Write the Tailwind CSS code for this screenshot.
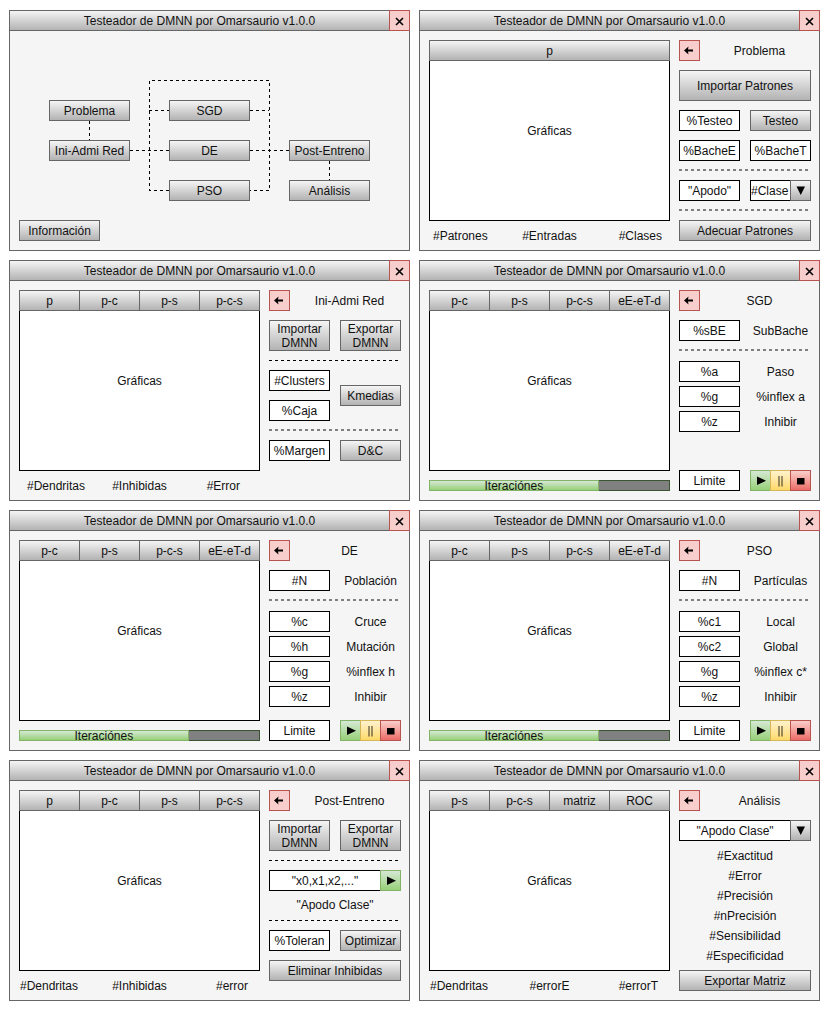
<!DOCTYPE html>
<html lang="es">
<head>
<meta charset="utf-8">
<meta name="viewport" content="width=device-width, initial-scale=1">
<title>Testeador de DMNN por Omarsaurio v1.0.0</title>
<script src="https://cdn.jsdelivr.net/npm/@tailwindcss/browser@4"></script>
</head>
<body class="bg-white font-['Liberation_Sans',Arial,sans-serif] text-[12px] leading-[14px] text-[#111]">

<svg class="hidden" aria-hidden="true">
  <symbol id="close" viewBox="0 0 19 19"><path d="M6 7l7 7M13 7l-7 7" fill="none" stroke="#000" stroke-width="1.6"/></symbol>
  <symbol id="back" viewBox="0 0 19 19"><path d="M4 9.500L8.500 5.500L8 8.600H13V10.400H8L8.500 13.500z" fill="#000"/></symbol>
  <symbol id="play" viewBox="0 0 19 19"><path d="M6 5.500L15 9.750L6 14z" fill="#000"/></symbol>
  <symbol id="pause" viewBox="0 0 19 19"><path d="M8 5v10.500M11 5v10.500" fill="none" stroke="#000" stroke-opacity=".4" stroke-width="2"/></symbol>
  <symbol id="stop" viewBox="0 0 19 19"><path d="M6 7h7.500v6.500H6z" fill="#000"/></symbol>
  <symbol id="down" viewBox="0 0 19 19"><path d="M5.500 5.500h8.500L9.750 14z" fill="#000"/></symbol>
</svg>

<main class="grid grid-cols-2 gap-[9px] pt-[10px] pr-[10px] pb-3 pl-[9px]">

  <!-- Menú -->
  <section class="flex min-h-[241px] flex-col">
    <header class="flex h-[21px]">
      <h2 class="flex flex-1 items-center justify-center border border-[#666] bg-linear-to-b from-[#f5f5f5] to-[#b3b3b3]">Testeador de DMNN por Omarsaurio v1.0.0</h2>
      <button aria-label="Cerrar" class="-ml-px w-[21px] border border-[#b85450] bg-[#f8cecc]"><svg class="size-[19px]"><use href="#close"/></svg></button>
    </header>
    <div class="relative flex-1 border-x border-b border-[#666] bg-[#f5f5f5]">
      <svg class="absolute top-0 left-0 h-[219px] w-[399px]" fill="none" stroke="#000" stroke-dasharray="3 3" shape-rendering="crispEdges" aria-hidden="true">
        <path d="M79.500 90V109M319.500 130V149M120 119.500H159M240 119.500H279M159 159.500H139.500V49.500H259.500V159.500H240M139 79.500H159M240 79.500H259"/>
      </svg>
      <button class="absolute top-[69px] left-[39px] h-[21px] w-[81px] border border-[#666] bg-linear-to-b from-[#f5f5f5] to-[#b3b3b3]">Problema</button>
      <button class="absolute top-[109px] left-[39px] h-[21px] w-[81px] border border-[#666] bg-linear-to-b from-[#f5f5f5] to-[#b3b3b3]">Ini-Admi Red</button>
      <button class="absolute top-[69px] left-[159px] h-[21px] w-[81px] border border-[#666] bg-linear-to-b from-[#f5f5f5] to-[#b3b3b3]">SGD</button>
      <button class="absolute top-[109px] left-[159px] h-[21px] w-[81px] border border-[#666] bg-linear-to-b from-[#f5f5f5] to-[#b3b3b3]">DE</button>
      <button class="absolute top-[149px] left-[159px] h-[21px] w-[81px] border border-[#666] bg-linear-to-b from-[#f5f5f5] to-[#b3b3b3]">PSO</button>
      <button class="absolute top-[109px] left-[279px] h-[21px] w-[81px] border border-[#666] bg-linear-to-b from-[#f5f5f5] to-[#b3b3b3]">Post-Entreno</button>
      <button class="absolute top-[149px] left-[279px] h-[21px] w-[81px] border border-[#666] bg-linear-to-b from-[#f5f5f5] to-[#b3b3b3]">Análisis</button>
      <button class="absolute top-[189px] left-[9px] h-[21px] w-[81px] border border-[#666] bg-linear-to-b from-[#f5f5f5] to-[#b3b3b3]">Información</button>
    </div>
  </section>

  <!-- Problema -->
  <section class="flex min-h-[241px] flex-col">
    <header class="flex h-[21px]">
      <h2 class="flex flex-1 items-center justify-center border border-[#666] bg-linear-to-b from-[#f5f5f5] to-[#b3b3b3]">Testeador de DMNN por Omarsaurio v1.0.0</h2>
      <button aria-label="Cerrar" class="-ml-px w-[21px] border border-[#b85450] bg-[#f8cecc]"><svg class="size-[19px]"><use href="#close"/></svg></button>
    </header>
    <div class="flex flex-1 gap-[9px] border-x border-b border-[#666] bg-[#f5f5f5] pt-[9px] pr-2 pb-2 pl-[9px]">
      <div class="flex flex-1 flex-col">
        <div class="flex h-[21px]">
          <button class="flex-1 border border-[#666] bg-linear-to-b from-[#f5f5f5] to-[#b3b3b3]">p</button>
        </div>
        <div class="flex min-h-[160px] flex-1 items-center justify-center border-x border-b border-black bg-white pb-5">Gráficas</div>
        <div class="grid grid-cols-[1fr_auto_1fr] pt-[9px] leading-3"><span class="pl-1">#Patrones</span><span>#Entradas</span><span class="pr-2 text-right">#Clases</span></div>
      </div>
      <div class="flex w-[132px] flex-col gap-[9px] pb-px">
        <div class="flex h-[21px] items-center gap-2">
          <button aria-label="Volver" class="size-[21px] border border-[#b85450] bg-[#f8cecc]"><svg class="size-[19px]"><use href="#back"/></svg></button>
          <h3 class="flex-1 text-center">Problema</h3>
        </div>
        <button class="h-[31px] border border-[#666] bg-linear-to-b from-[#f5f5f5] to-[#b3b3b3]">Importar Patrones</button>
        <div class="grid grid-cols-2 gap-x-[10px] gap-y-[9px]">
          <input aria-label="Porcentaje de testeo" value="%Testeo" class="h-[21px] w-full border border-black bg-white text-center">
          <button class="h-[21px] border border-[#666] bg-linear-to-b from-[#f5f5f5] to-[#b3b3b3]">Testeo</button>
          <input aria-label="Bache de entrenamiento" value="%BacheE" class="h-[21px] w-full border border-black bg-white text-center">
          <input aria-label="Bache de testeo" value="%BacheT" class="h-[21px] w-full border border-black bg-white text-center">
        </div>
        <div class="-mt-px h-[2px] bg-[repeating-linear-gradient(90deg,#7f7f7f_0_3px,transparent_3px_6px)]"></div>
        <div class="grid grid-cols-2 gap-[10px]">
          <input aria-label="Apodo" value="&quot;Apodo&quot;" class="h-[21px] w-full border border-black bg-white text-center">
          <div class="relative">
            <select aria-label="Clase" class="block h-[21px] w-full appearance-none border border-black bg-white pr-[19px]"><option>#Clase</option></select>
            <span class="pointer-events-none absolute top-0 right-0 size-[21px] border border-[#666] bg-linear-to-b from-[#f5f5f5] to-[#b3b3b3]"><svg class="size-[19px]"><use href="#down"/></svg></span>
          </div>
        </div>
        <div class="-mt-px h-[2px] bg-[repeating-linear-gradient(90deg,#7f7f7f_0_3px,transparent_3px_6px)]"></div>
        <button class="h-[21px] border border-[#666] bg-linear-to-b from-[#f5f5f5] to-[#b3b3b3]">Adecuar Patrones</button>
      </div>
    </div>
  </section>

  <!-- Ini-Admi Red -->
  <section class="flex min-h-[241px] flex-col">
    <header class="flex h-[21px]">
      <h2 class="flex flex-1 items-center justify-center border border-[#666] bg-linear-to-b from-[#f5f5f5] to-[#b3b3b3]">Testeador de DMNN por Omarsaurio v1.0.0</h2>
      <button aria-label="Cerrar" class="-ml-px w-[21px] border border-[#b85450] bg-[#f8cecc]"><svg class="size-[19px]"><use href="#close"/></svg></button>
    </header>
    <div class="flex flex-1 gap-[9px] border-x border-b border-[#666] bg-[#f5f5f5] pt-[9px] pr-2 pb-2 pl-[9px]">
      <div class="flex flex-1 flex-col">
        <div class="flex h-[21px]">
          <button class="flex-1 border border-[#666] bg-linear-to-b from-[#f5f5f5] to-[#b3b3b3]">p</button>
          <button class="-ml-px flex-1 border border-[#666] bg-linear-to-b from-[#f5f5f5] to-[#b3b3b3]">p-c</button>
          <button class="-ml-px flex-1 border border-[#666] bg-linear-to-b from-[#f5f5f5] to-[#b3b3b3]">p-s</button>
          <button class="-ml-px flex-1 border border-[#666] bg-linear-to-b from-[#f5f5f5] to-[#b3b3b3]">p-c-s</button>
        </div>
        <div class="flex min-h-[160px] flex-1 items-center justify-center border-x border-b border-black bg-white pb-5">Gráficas</div>
        <div class="grid grid-cols-[1fr_auto_1fr] pt-[9px] leading-3"><span class="pl-2">#Dendritas</span><span>#Inhibidas</span><span class="pr-5 text-right">#Error</span></div>
      </div>
      <div class="flex w-[132px] flex-col gap-[9px] pb-px">
        <div class="flex h-[21px] items-center gap-2">
          <button aria-label="Volver" class="size-[21px] border border-[#b85450] bg-[#f8cecc]"><svg class="size-[19px]"><use href="#back"/></svg></button>
          <h3 class="flex-1 text-center">Ini-Admi Red</h3>
        </div>
        <div class="grid grid-cols-2 gap-[10px]">
          <button class="h-[31px] border border-[#666] bg-linear-to-b from-[#f5f5f5] to-[#b3b3b3]">Importar<br>DMNN</button>
          <button class="h-[31px] border border-[#666] bg-linear-to-b from-[#f5f5f5] to-[#b3b3b3]">Exportar<br>DMNN</button>
        </div>
        <div class="h-px bg-[repeating-linear-gradient(90deg,#000_0_3px,transparent_3px_6px)]"></div>
        <div class="grid grid-cols-2 items-center gap-[10px]">
          <div class="flex flex-col gap-[9px]">
            <input aria-label="Clusters" value="#Clusters" class="h-[21px] w-full border border-black bg-white text-center">
            <input aria-label="Caja" value="%Caja" class="h-[21px] w-full border border-black bg-white text-center">
          </div>
          <button class="h-[21px] border border-[#666] bg-linear-to-b from-[#f5f5f5] to-[#b3b3b3]">Kmedias</button>
        </div>
        <div class="-mt-px h-[2px] bg-[repeating-linear-gradient(90deg,#7f7f7f_0_3px,transparent_3px_6px)]"></div>
        <div class="grid grid-cols-2 gap-[10px]">
          <input aria-label="Margen" value="%Margen" class="h-[21px] w-full border border-black bg-white text-center">
          <button class="h-[21px] border border-[#666] bg-linear-to-b from-[#f5f5f5] to-[#b3b3b3]">D&amp;C</button>
        </div>
      </div>
    </div>
  </section>

  <!-- SGD -->
  <section class="flex min-h-[241px] flex-col">
    <header class="flex h-[21px]">
      <h2 class="flex flex-1 items-center justify-center border border-[#666] bg-linear-to-b from-[#f5f5f5] to-[#b3b3b3]">Testeador de DMNN por Omarsaurio v1.0.0</h2>
      <button aria-label="Cerrar" class="-ml-px w-[21px] border border-[#b85450] bg-[#f8cecc]"><svg class="size-[19px]"><use href="#close"/></svg></button>
    </header>
    <div class="flex flex-1 gap-[9px] border-x border-b border-[#666] bg-[#f5f5f5] pt-[9px] pr-2 pb-2 pl-[9px]">
      <div class="flex flex-1 flex-col pb-px">
        <div class="flex h-[21px]">
          <button class="flex-1 border border-[#666] bg-linear-to-b from-[#f5f5f5] to-[#b3b3b3]">p-c</button>
          <button class="-ml-px flex-1 border border-[#666] bg-linear-to-b from-[#f5f5f5] to-[#b3b3b3]">p-s</button>
          <button class="-ml-px flex-1 border border-[#666] bg-linear-to-b from-[#f5f5f5] to-[#b3b3b3]">p-c-s</button>
          <button class="-ml-px flex-1 border border-[#666] bg-linear-to-b from-[#f5f5f5] to-[#b3b3b3]">eE-eT-d</button>
        </div>
        <div class="flex min-h-[160px] flex-1 items-center justify-center border-x border-b border-black bg-white pb-5">Gráficas</div>
        <div role="progressbar" aria-label="Iteraciónes" aria-valuenow="71" class="mt-[9px] flex h-[11px] border border-[#3a5431] bg-[#808080]">
          <div class="-m-px flex items-center justify-center border border-[#82b366] bg-linear-to-b from-[#d5e8d4] to-[#97d077]" style="width:71%">Iteraciónes</div>
        </div>
      </div>
      <div class="flex w-[132px] flex-col gap-[9px] pb-px">
        <div class="flex h-[21px] items-center gap-2">
          <button aria-label="Volver" class="size-[21px] border border-[#b85450] bg-[#f8cecc]"><svg class="size-[19px]"><use href="#back"/></svg></button>
          <h3 class="flex-1 text-center">SGD</h3>
        </div>
        <div class="grid grid-cols-2 items-center gap-[10px]">
          <input id="sgd-sb" value="%sBE" class="h-[21px] w-full border border-black bg-white text-center"><label for="sgd-sb" class="text-center">SubBache</label>
        </div>
        <div class="-mt-px h-[2px] bg-[repeating-linear-gradient(90deg,#7f7f7f_0_3px,transparent_3px_6px)]"></div>
        <div class="grid grid-cols-2 items-center gap-x-[10px] gap-y-1 pt-px">
          <input id="sgd-a" value="%a" class="h-[21px] w-full border border-black bg-white text-center"><label for="sgd-a" class="text-center">Paso</label>
          <input id="sgd-g" value="%g" class="h-[21px] w-full border border-black bg-white text-center"><label for="sgd-g" class="text-center">%inflex a</label>
          <input id="sgd-z" value="%z" class="h-[21px] w-full border border-black bg-white text-center"><label for="sgd-z" class="text-center">Inhibir</label>
        </div>
        <div class="mt-auto grid grid-cols-2 gap-[10px]">
          <input aria-label="Limite" value="Limite" class="h-[21px] w-full border border-black bg-white text-center">
          <div class="flex">
            <button aria-label="Iniciar" class="size-[21px] border border-[#82b366] bg-linear-to-b from-[#d5e8d4] to-[#97d077]"><svg class="size-[19px]"><use href="#play"/></svg></button>
            <button aria-label="Pausar" class="-ml-px size-[21px] border border-[#d6b656] bg-linear-to-b from-[#fff2cc] to-[#ffd966]"><svg class="size-[19px]"><use href="#pause"/></svg></button>
            <button aria-label="Detener" class="-ml-px size-[21px] border border-[#b85450] bg-linear-to-b from-[#f8cecc] to-[#ea6b66]"><svg class="size-[19px]"><use href="#stop"/></svg></button>
          </div>
        </div>
      </div>
    </div>
  </section>

  <!-- DE -->
  <section class="flex min-h-[241px] flex-col">
    <header class="flex h-[21px]">
      <h2 class="flex flex-1 items-center justify-center border border-[#666] bg-linear-to-b from-[#f5f5f5] to-[#b3b3b3]">Testeador de DMNN por Omarsaurio v1.0.0</h2>
      <button aria-label="Cerrar" class="-ml-px w-[21px] border border-[#b85450] bg-[#f8cecc]"><svg class="size-[19px]"><use href="#close"/></svg></button>
    </header>
    <div class="flex flex-1 gap-[9px] border-x border-b border-[#666] bg-[#f5f5f5] pt-[9px] pr-2 pb-2 pl-[9px]">
      <div class="flex flex-1 flex-col pb-px">
        <div class="flex h-[21px]">
          <button class="flex-1 border border-[#666] bg-linear-to-b from-[#f5f5f5] to-[#b3b3b3]">p-c</button>
          <button class="-ml-px flex-1 border border-[#666] bg-linear-to-b from-[#f5f5f5] to-[#b3b3b3]">p-s</button>
          <button class="-ml-px flex-1 border border-[#666] bg-linear-to-b from-[#f5f5f5] to-[#b3b3b3]">p-c-s</button>
          <button class="-ml-px flex-1 border border-[#666] bg-linear-to-b from-[#f5f5f5] to-[#b3b3b3]">eE-eT-d</button>
        </div>
        <div class="flex min-h-[160px] flex-1 items-center justify-center border-x border-b border-black bg-white pb-5">Gráficas</div>
        <div role="progressbar" aria-label="Iteraciónes" aria-valuenow="71" class="mt-[9px] flex h-[11px] border border-[#3a5431] bg-[#808080]">
          <div class="-m-px flex items-center justify-center border border-[#82b366] bg-linear-to-b from-[#d5e8d4] to-[#97d077]" style="width:71%">Iteraciónes</div>
        </div>
      </div>
      <div class="flex w-[132px] flex-col gap-[9px] pb-px">
        <div class="flex h-[21px] items-center gap-2">
          <button aria-label="Volver" class="size-[21px] border border-[#b85450] bg-[#f8cecc]"><svg class="size-[19px]"><use href="#back"/></svg></button>
          <h3 class="flex-1 text-center">DE</h3>
        </div>
        <div class="grid grid-cols-2 items-center gap-[10px]">
          <input id="de-n" value="#N" class="h-[21px] w-full border border-black bg-white text-center"><label for="de-n" class="text-center">Población</label>
        </div>
        <div class="-mt-px h-[2px] bg-[repeating-linear-gradient(90deg,#7f7f7f_0_3px,transparent_3px_6px)]"></div>
        <div class="grid grid-cols-2 items-center gap-x-[10px] gap-y-1 pt-px">
          <input id="de-c" value="%c" class="h-[21px] w-full border border-black bg-white text-center"><label for="de-c" class="text-center">Cruce</label>
          <input id="de-h" value="%h" class="h-[21px] w-full border border-black bg-white text-center"><label for="de-h" class="text-center">Mutación</label>
          <input id="de-g" value="%g" class="h-[21px] w-full border border-black bg-white text-center"><label for="de-g" class="text-center">%inflex h</label>
          <input id="de-z" value="%z" class="h-[21px] w-full border border-black bg-white text-center"><label for="de-z" class="text-center">Inhibir</label>
        </div>
        <div class="mt-auto grid grid-cols-2 gap-[10px]">
          <input aria-label="Limite" value="Limite" class="h-[21px] w-full border border-black bg-white text-center">
          <div class="flex">
            <button aria-label="Iniciar" class="size-[21px] border border-[#82b366] bg-linear-to-b from-[#d5e8d4] to-[#97d077]"><svg class="size-[19px]"><use href="#play"/></svg></button>
            <button aria-label="Pausar" class="-ml-px size-[21px] border border-[#d6b656] bg-linear-to-b from-[#fff2cc] to-[#ffd966]"><svg class="size-[19px]"><use href="#pause"/></svg></button>
            <button aria-label="Detener" class="-ml-px size-[21px] border border-[#b85450] bg-linear-to-b from-[#f8cecc] to-[#ea6b66]"><svg class="size-[19px]"><use href="#stop"/></svg></button>
          </div>
        </div>
      </div>
    </div>
  </section>

  <!-- PSO -->
  <section class="flex min-h-[241px] flex-col">
    <header class="flex h-[21px]">
      <h2 class="flex flex-1 items-center justify-center border border-[#666] bg-linear-to-b from-[#f5f5f5] to-[#b3b3b3]">Testeador de DMNN por Omarsaurio v1.0.0</h2>
      <button aria-label="Cerrar" class="-ml-px w-[21px] border border-[#b85450] bg-[#f8cecc]"><svg class="size-[19px]"><use href="#close"/></svg></button>
    </header>
    <div class="flex flex-1 gap-[9px] border-x border-b border-[#666] bg-[#f5f5f5] pt-[9px] pr-2 pb-2 pl-[9px]">
      <div class="flex flex-1 flex-col pb-px">
        <div class="flex h-[21px]">
          <button class="flex-1 border border-[#666] bg-linear-to-b from-[#f5f5f5] to-[#b3b3b3]">p-c</button>
          <button class="-ml-px flex-1 border border-[#666] bg-linear-to-b from-[#f5f5f5] to-[#b3b3b3]">p-s</button>
          <button class="-ml-px flex-1 border border-[#666] bg-linear-to-b from-[#f5f5f5] to-[#b3b3b3]">p-c-s</button>
          <button class="-ml-px flex-1 border border-[#666] bg-linear-to-b from-[#f5f5f5] to-[#b3b3b3]">eE-eT-d</button>
        </div>
        <div class="flex min-h-[160px] flex-1 items-center justify-center border-x border-b border-black bg-white pb-5">Gráficas</div>
        <div role="progressbar" aria-label="Iteraciónes" aria-valuenow="71" class="mt-[9px] flex h-[11px] border border-[#3a5431] bg-[#808080]">
          <div class="-m-px flex items-center justify-center border border-[#82b366] bg-linear-to-b from-[#d5e8d4] to-[#97d077]" style="width:71%">Iteraciónes</div>
        </div>
      </div>
      <div class="flex w-[132px] flex-col gap-[9px] pb-px">
        <div class="flex h-[21px] items-center gap-2">
          <button aria-label="Volver" class="size-[21px] border border-[#b85450] bg-[#f8cecc]"><svg class="size-[19px]"><use href="#back"/></svg></button>
          <h3 class="flex-1 text-center">PSO</h3>
        </div>
        <div class="grid grid-cols-2 items-center gap-[10px]">
          <input id="pso-n" value="#N" class="h-[21px] w-full border border-black bg-white text-center"><label for="pso-n" class="text-center">Partículas</label>
        </div>
        <div class="-mt-px h-[2px] bg-[repeating-linear-gradient(90deg,#7f7f7f_0_3px,transparent_3px_6px)]"></div>
        <div class="grid grid-cols-2 items-center gap-x-[10px] gap-y-1 pt-px">
          <input id="pso-c1" value="%c1" class="h-[21px] w-full border border-black bg-white text-center"><label for="pso-c1" class="text-center">Local</label>
          <input id="pso-c2" value="%c2" class="h-[21px] w-full border border-black bg-white text-center"><label for="pso-c2" class="text-center">Global</label>
          <input id="pso-g" value="%g" class="h-[21px] w-full border border-black bg-white text-center"><label for="pso-g" class="text-center">%inflex c*</label>
          <input id="pso-z" value="%z" class="h-[21px] w-full border border-black bg-white text-center"><label for="pso-z" class="text-center">Inhibir</label>
        </div>
        <div class="mt-auto grid grid-cols-2 gap-[10px]">
          <input aria-label="Limite" value="Limite" class="h-[21px] w-full border border-black bg-white text-center">
          <div class="flex">
            <button aria-label="Iniciar" class="size-[21px] border border-[#82b366] bg-linear-to-b from-[#d5e8d4] to-[#97d077]"><svg class="size-[19px]"><use href="#play"/></svg></button>
            <button aria-label="Pausar" class="-ml-px size-[21px] border border-[#d6b656] bg-linear-to-b from-[#fff2cc] to-[#ffd966]"><svg class="size-[19px]"><use href="#pause"/></svg></button>
            <button aria-label="Detener" class="-ml-px size-[21px] border border-[#b85450] bg-linear-to-b from-[#f8cecc] to-[#ea6b66]"><svg class="size-[19px]"><use href="#stop"/></svg></button>
          </div>
        </div>
      </div>
    </div>
  </section>

  <!-- Post-Entreno -->
  <section class="flex min-h-[241px] flex-col">
    <header class="flex h-[21px]">
      <h2 class="flex flex-1 items-center justify-center border border-[#666] bg-linear-to-b from-[#f5f5f5] to-[#b3b3b3]">Testeador de DMNN por Omarsaurio v1.0.0</h2>
      <button aria-label="Cerrar" class="-ml-px w-[21px] border border-[#b85450] bg-[#f8cecc]"><svg class="size-[19px]"><use href="#close"/></svg></button>
    </header>
    <div class="flex flex-1 gap-[9px] border-x border-b border-[#666] bg-[#f5f5f5] pt-[9px] pr-2 pb-2 pl-[9px]">
      <div class="flex flex-1 flex-col">
        <div class="flex h-[21px]">
          <button class="flex-1 border border-[#666] bg-linear-to-b from-[#f5f5f5] to-[#b3b3b3]">p</button>
          <button class="-ml-px flex-1 border border-[#666] bg-linear-to-b from-[#f5f5f5] to-[#b3b3b3]">p-c</button>
          <button class="-ml-px flex-1 border border-[#666] bg-linear-to-b from-[#f5f5f5] to-[#b3b3b3]">p-s</button>
          <button class="-ml-px flex-1 border border-[#666] bg-linear-to-b from-[#f5f5f5] to-[#b3b3b3]">p-c-s</button>
        </div>
        <div class="flex min-h-[160px] flex-1 items-center justify-center border-x border-b border-black bg-white pb-5">Gráficas</div>
        <div class="grid grid-cols-[1fr_auto_1fr] pt-[9px] leading-3"><span class="pl-px">#Dendritas</span><span>#Inhibidas</span><span class="pr-3 text-right">#error</span></div>
      </div>
      <div class="flex w-[132px] flex-col gap-[9px] pb-px">
        <div class="flex h-[21px] items-center gap-2">
          <button aria-label="Volver" class="size-[21px] border border-[#b85450] bg-[#f8cecc]"><svg class="size-[19px]"><use href="#back"/></svg></button>
          <h3 class="flex-1 text-center">Post-Entreno</h3>
        </div>
        <div class="grid grid-cols-2 gap-[10px]">
          <button class="h-[31px] border border-[#666] bg-linear-to-b from-[#f5f5f5] to-[#b3b3b3]">Importar<br>DMNN</button>
          <button class="h-[31px] border border-[#666] bg-linear-to-b from-[#f5f5f5] to-[#b3b3b3]">Exportar<br>DMNN</button>
        </div>
        <div class="h-px bg-[repeating-linear-gradient(90deg,#000_0_3px,transparent_3px_6px)]"></div>
        <div class="flex">
          <input aria-label="Patrón" value="&quot;x0,x1,x2,...&quot;" class="h-[21px] w-0 flex-1 border border-black bg-white text-center">
          <button aria-label="Ejecutar" class="-ml-px size-[21px] border border-[#82b366] bg-linear-to-b from-[#d5e8d4] to-[#97d077]"><svg class="size-[19px]"><use href="#play"/></svg></button>
        </div>
        <p class="text-center leading-[11px]">"Apodo Clase"</p>
        <div class="h-px bg-[repeating-linear-gradient(90deg,#000_0_3px,transparent_3px_6px)]"></div>
        <div class="grid grid-cols-2 gap-[10px]">
          <input aria-label="Tolerancia" value="%Toleran" class="h-[21px] w-full border border-black bg-white text-center">
          <button class="h-[21px] border border-[#666] bg-linear-to-b from-[#f5f5f5] to-[#b3b3b3]">Optimizar</button>
        </div>
        <button class="h-[21px] border border-[#666] bg-linear-to-b from-[#f5f5f5] to-[#b3b3b3]">Eliminar Inhibidas</button>
      </div>
    </div>
  </section>

  <!-- Análisis -->
  <section class="flex min-h-[241px] flex-col">
    <header class="flex h-[21px]">
      <h2 class="flex flex-1 items-center justify-center border border-[#666] bg-linear-to-b from-[#f5f5f5] to-[#b3b3b3]">Testeador de DMNN por Omarsaurio v1.0.0</h2>
      <button aria-label="Cerrar" class="-ml-px w-[21px] border border-[#b85450] bg-[#f8cecc]"><svg class="size-[19px]"><use href="#close"/></svg></button>
    </header>
    <div class="flex flex-1 gap-[9px] border-x border-b border-[#666] bg-[#f5f5f5] pt-[9px] pr-2 pb-2 pl-[9px]">
      <div class="flex flex-1 flex-col">
        <div class="flex h-[21px]">
          <button class="flex-1 border border-[#666] bg-linear-to-b from-[#f5f5f5] to-[#b3b3b3]">p-s</button>
          <button class="-ml-px flex-1 border border-[#666] bg-linear-to-b from-[#f5f5f5] to-[#b3b3b3]">p-c-s</button>
          <button class="-ml-px flex-1 border border-[#666] bg-linear-to-b from-[#f5f5f5] to-[#b3b3b3]">matriz</button>
          <button class="-ml-px flex-1 border border-[#666] bg-linear-to-b from-[#f5f5f5] to-[#b3b3b3]">ROC</button>
        </div>
        <div class="flex min-h-[160px] flex-1 items-center justify-center border-x border-b border-black bg-white pb-5">Gráficas</div>
        <div class="grid grid-cols-[1fr_auto_1fr] pt-[9px] leading-3"><span class="pl-px">#Dendritas</span><span>#errorE</span><span class="pr-3 text-right">#errorT</span></div>
      </div>
      <div class="flex w-[132px] flex-col gap-[9px] pb-px">
        <div class="flex h-[21px] items-center gap-2">
          <button aria-label="Volver" class="size-[21px] border border-[#b85450] bg-[#f8cecc]"><svg class="size-[19px]"><use href="#back"/></svg></button>
          <h3 class="flex-1 text-center">Análisis</h3>
        </div>
        <div class="relative">
          <select aria-label="Apodo de clase" class="block h-[21px] w-full appearance-none border border-black bg-white pr-5 text-center"><option>"Apodo Clase"</option></select>
          <span class="pointer-events-none absolute top-0 right-0 size-[21px] border border-[#666] bg-linear-to-b from-[#f5f5f5] to-[#b3b3b3]"><svg class="size-[19px]"><use href="#down"/></svg></span>
        </div>
        <ul class="-mt-1 -mb-[5px] text-center leading-5">
          <li>#Exactitud</li><li>#Error</li><li>#Precisión</li><li>#nPrecisión</li><li>#Sensibilidad</li><li>#Especificidad</li>
        </ul>
        <button class="h-[21px] border border-[#666] bg-linear-to-b from-[#f5f5f5] to-[#b3b3b3]">Exportar Matriz</button>
      </div>
    </div>
  </section>

</main>
</body>
</html>
